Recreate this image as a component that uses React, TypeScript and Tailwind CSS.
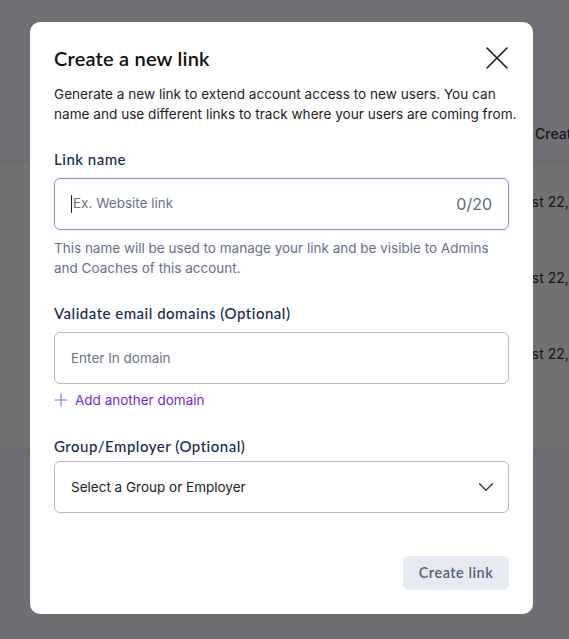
import { Plus, ChevronDown } from "lucide-react";

const rows = ["August 22, 2023", "August 22, 2023", "August 22, 2023"];

function Backdrop() {
  return (
    <div className="min-h-[639px] bg-[#6f6f73] font-['Inter',sans-serif] text-[14px] text-[#161616]">
      <div className="h-[162px] bg-[#707074] border-b border-[#68686b] flex items-end pb-[17px]">
        <span className="ml-[535px] whitespace-nowrap font-medium">Created on</span>
      </div>
      <div className="bg-[#717171] pt-[29px] pb-[29px] border-b border-[#6a6a6c]">
        {rows.map((r, i) => (
          <div key={i} className="h-[76px] whitespace-nowrap pl-[497px]">{r}</div>
        ))}
      </div>
    </div>
  );
}

function Label({ children }: { children: React.ReactNode }) {
  return <label className="block font-['Lato',sans-serif] text-[15px] font-medium text-[#15294a] tracking-[0.5px]">{children}</label>;
}

export default function App() {
  return (
    <div className="relative h-[639px] w-[569px] overflow-hidden">
      <Backdrop />
      <div className="absolute left-[30px] top-[22px] w-[503px] h-[592px] rounded-[10px] bg-white px-6 pt-[22px] font-['Inter',sans-serif]">
        <div className="flex items-center justify-between">
          <h2 className="font-['Lato',sans-serif] text-[20px] font-semibold text-[#111] leading-[28px] tracking-[0.2px]">Create a new link</h2>
          <button className="mr-[1px] text-[#1b1b1b]">
            <svg width="22" height="22" viewBox="0 0 22 22" fill="none" stroke="currentColor" strokeWidth="1.6" strokeLinecap="round">
              <path d="M1 1 L21 21 M21 1 L1 21" />
            </svg>
          </button>
        </div>
        <p className="mt-[12px] -mr-4 text-[13.6px] leading-[20px] text-[#1c1c1c]">
          <span className="block whitespace-nowrap">Generate a new link to extend account access to new users. You can</span>
          <span className="block whitespace-nowrap">name and use different links to track where your users are coming from.</span>
        </p>

        <div className="mt-[24px]">
          <Label>Link name</Label>
          <div className="mt-[7px] flex h-[52px] items-center justify-between rounded-[6px] border border-[#a57fcc] px-4">
            <span className="flex items-center text-[13.5px] text-[#697386]">
              <span className="mr-[1px] inline-block h-[18px] w-[1px] bg-[#222]" />
              Ex. Website link
            </span>
            <span className="text-[16px] text-[#5f6b7f]">0/20</span>
          </div>
          <p className="mt-[8px] text-[13.5px] leading-[20px] text-[#667085]">
            This name will be used to manage your link and be visible to Admins and Coaches of this account.
          </p>
        </div>

        <div className="mt-[24px]">
          <Label>Validate email domains (Optional)</Label>
          <div className="mt-[8px] flex h-[52px] items-center rounded-[6px] border border-[#b9bac6] px-4 text-[13.5px] text-[#697386]">
            Enter In domain
          </div>
          <button className="mt-[6px] ml-[-3px] flex items-center gap-[4px] text-[13.5px] text-[#7a1fd1]">
            <Plus size={20} strokeWidth={1.3} className="text-[#9b5be0]" />
            Add another domain
          </button>
        </div>

        <div className="mt-[25px]">
          <Label>Group/Employer (Optional)</Label>
          <div className="mt-[3px] flex h-[52px] items-center justify-between rounded-[6px] border border-[#b9bac6] pl-4 pr-[9px] text-[13.5px] text-[#222]">
            Select a Group or Employer
            <ChevronDown size={26} strokeWidth={1.2} className="text-[#333]" />
          </div>
        </div>

        <div className="mt-[43px] flex justify-end">
          <button className="h-[34px] w-[106px] rounded-[6px] bg-[#e8eaf3] font-['Lato',sans-serif] text-[14.5px] font-semibold tracking-[0.5px] text-[#56627a]">
            Create link
          </button>
        </div>
      </div>
    </div>
  );
}
